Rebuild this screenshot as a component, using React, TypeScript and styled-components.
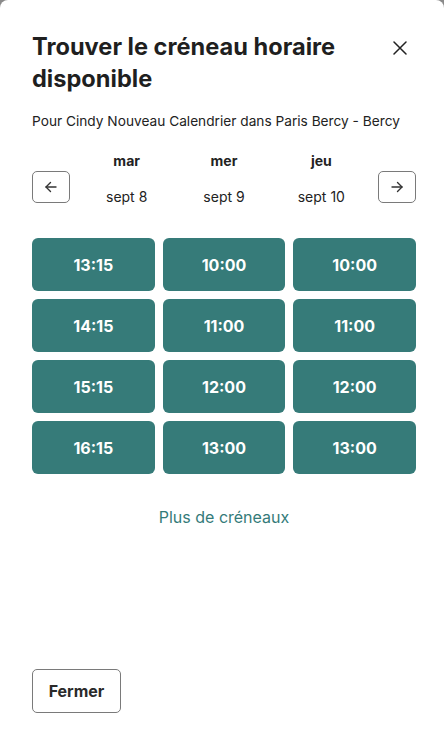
import React from "react";
import styled, { createGlobalStyle } from "styled-components";

const Global = createGlobalStyle`
  html, body { margin: 0; padding: 0; background: #8a8a8a; }
  body { font-family: Inter, "Noto Sans", sans-serif; -webkit-font-smoothing: antialiased; }
  * { box-sizing: border-box; }
`;

const Modal = styled.div`
  width: 444px;
  height: 738px;
  background: #fff;
  border-radius: 8px 8px 0 0;
  padding: 31px 28px 25px 32px;
  display: flex;
  flex-direction: column;
  color: #222;
`;

const Header = styled.div`
  display: flex;
  justify-content: space-between;
  align-items: flex-start;
`;

const Title = styled.h1`
  margin: 0;
  font-size: 23.6px;
  line-height: 32px;
  font-weight: 700;
  color: #1f1f1f;
`;

const CloseButton = styled.button`
  border: none;
  background: none;
  padding: 0;
  margin: 7px 6px 0 0;
  width: 20px;
  height: 20px;
  display: flex;
  align-items: center;
  justify-content: center;
  cursor: pointer;
`;

const Subtitle = styled.p`
  margin: 16px 0 0;
  font-size: 13.7px;
  line-height: 20px;
  color: #222;
`;

const DaysRow = styled.div`
  display: flex;
  align-items: flex-start;
  gap: 8px;
  margin-top: 20px;
`;

const ArrowButton = styled.button`
  width: 38px;
  height: 32px;
  margin-top: 20px;
  border: 1px solid #7a7a7a;
  border-radius: 5px;
  background: #fff;
  display: flex;
  align-items: center;
  justify-content: center;
  padding: 0;
  flex: none;
`;

const Days = styled.div`
  flex: 1;
  display: grid;
  grid-template-columns: repeat(3, 1fr);
`;

const Day = styled.div`
  display: flex;
  flex-direction: column;
  align-items: center;
`;

const DayName = styled.span`
  font-size: 14px;
  font-weight: 700;
  line-height: 20px;
  color: #222;
`;

const DayDate = styled.span`
  margin-top: 16px;
  font-size: 14px;
  line-height: 20px;
  color: #222;
`;

const Grid = styled.div`
  margin-top: 31px;
  display: grid;
  grid-template-columns: repeat(3, 1fr);
  gap: 8px;
`;

const Column = styled.div`
  display: flex;
  flex-direction: column;
  gap: 8px;
`;

const Slot = styled.button`
  height: 53px;
  border: none;
  border-radius: 6px;
  background: #367b79;
  color: #fff;
  font-family: Inter, "Noto Sans", sans-serif;
  font-size: 16px;
  font-weight: 700;
  cursor: pointer;
`;

const More = styled.button`
  align-self: center;
  margin-top: 32px;
  border: none;
  background: none;
  color: #347b79;
  font-family: Inter, "Noto Sans", sans-serif;
  font-size: 16px;
  line-height: 20px;
  cursor: pointer;
`;

const Footer = styled.div`
  margin-top: auto;
`;

const CloseFooter = styled.button`
  width: 89px;
  height: 44px;
  border: 1px solid #7a7a7a;
  border-radius: 5px;
  background: #fff;
  color: #2a2a2a;
  font-family: Inter, "Noto Sans", sans-serif;
  font-size: 16px;
  font-weight: 700;
`;

const days = [
  { name: "mar", date: "sept 8", slots: ["13:15", "14:15", "15:15", "16:15"] },
  { name: "mer", date: "sept 9", slots: ["10:00", "11:00", "12:00", "13:00"] },
  { name: "jeu", date: "sept 10", slots: ["10:00", "11:00", "12:00", "13:00"] },
];

const Arrow = ({ dir }: { dir: "left" | "right" }) => (
  <svg width="14" height="14" viewBox="0 0 14 14" fill="none" stroke="#333" strokeWidth="1.4" strokeLinecap="round" strokeLinejoin="round">
    {dir === "left" ? (
      <>
        <path d="M12 7H2" />
        <path d="M6.5 2.5L2 7l4.5 4.5" />
      </>
    ) : (
      <>
        <path d="M2 7h10" />
        <path d="M7.5 2.5L12 7l-4.5 4.5" />
      </>
    )}
  </svg>
);

export default function App() {
  return (
    <>
      <Global />
      <Modal>
        <Header>
          <Title>
            Trouver le créneau horaire
            <br />
            disponible
          </Title>
          <CloseButton aria-label="Fermer">
            <svg width="14" height="14" viewBox="0 0 14 14" stroke="#222" strokeWidth="1.5" strokeLinecap="round">
              <path d="M1 1l12 12M13 1L1 13" />
            </svg>
          </CloseButton>
        </Header>
        <Subtitle>Pour Cindy Nouveau Calendrier dans Paris Bercy - Bercy</Subtitle>
        <DaysRow>
          <ArrowButton aria-label="Précédent">
            <Arrow dir="left" />
          </ArrowButton>
          <Days>
            {days.map((d) => (
              <Day key={d.name}>
                <DayName>{d.name}</DayName>
                <DayDate>{d.date}</DayDate>
              </Day>
            ))}
          </Days>
          <ArrowButton aria-label="Suivant">
            <Arrow dir="right" />
          </ArrowButton>
        </DaysRow>
        <Grid>
          {days.map((d) => (
            <Column key={d.name}>
              {d.slots.map((s, i) => (
                <Slot key={i}>{s}</Slot>
              ))}
            </Column>
          ))}
        </Grid>
        <More>Plus de créneaux</More>
        <Footer>
          <CloseFooter>Fermer</CloseFooter>
        </Footer>
      </Modal>
    </>
  );
}
